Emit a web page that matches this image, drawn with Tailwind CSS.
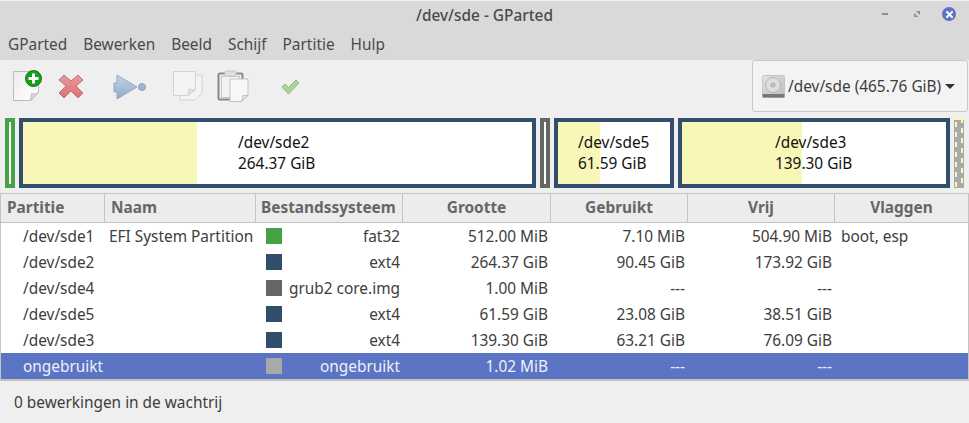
<!DOCTYPE html>
<html lang="en">
<head>
    <meta charset="UTF-8">
    <title>/dev/sde - GParted</title>
    <script src="https://cdn.jsdelivr.net/npm/@tailwindcss/browser@4"></script>
</head>
<body class="w-[969px] h-[423px] overflow-hidden bg-[#efefef] text-[#3d3d3d] text-[15.4px] font-['Noto_Sans',sans-serif]">
    <!-- Title bar -->
    <div class="h-[30px] bg-[#d9d9d9] border-t border-[#f0f0f0] flex items-center relative">
        <div class="w-full text-center text-[#4a4a4a] font-medium">/dev/sde - GParted</div>
        <div class="absolute right-[13px] top-[6px] flex items-center">
            <div class="w-[6px] h-[2px] bg-[#8e8e8e]"></div>
            <svg width="6" height="6" viewBox="0 0 6 6" class="ml-[26px] mr-[22px]"><path d="M0 6V2L2 4L4 2L2 0H6V4L4 2L2 4L4 6Z" fill="#8e8e8e"/></svg>
            <div class="w-[14px] h-[14px] rounded-full bg-[#5c74c4] flex items-center justify-center">
                <svg width="7" height="7" viewBox="0 0 7 7"><path d="M1 1L6 6M6 1L1 6" stroke="#fff" stroke-width="2" stroke-linecap="round"/></svg>
            </div>
        </div>
    </div>
    <!-- Menu -->
    <div class="h-[30px] bg-[#d9d9d9] flex items-center pl-[8px] gap-[16px] text-[#4a4a4a]">
        <span>GParted</span><span>Bewerken</span><span>Beeld</span><span>Schijf</span><span>Partitie</span><span>Hulp</span>
    </div>
    <!-- Toolbar -->
    <div class="h-[52px] flex relative">
        <div class="flex items-start pt-[10px] pl-[12px]">
            <svg width="32" height="32" viewBox="0 0 32 32" class="mr-[14px]">
                <defs>
                    <linearGradient id="page" x1="0" y1="0" x2="1" y2="1"><stop offset="0" stop-color="#ececec"/><stop offset="1" stop-color="#fff"/></linearGradient>
                    <linearGradient id="cross" x1="0" y1="0" x2="0" y2="1"><stop offset="0" stop-color="#e89a9a"/><stop offset="1" stop-color="#de7272"/></linearGradient>
                    <linearGradient id="arrow" x1="0" y1="0" x2="0" y2="1"><stop offset="0" stop-color="#c5d3e6"/><stop offset="1" stop-color="#8fa9ca"/></linearGradient>
                    <linearGradient id="disk" x1="0" y1="0" x2="1" y2="1"><stop offset="0" stop-color="#e4e4e4"/><stop offset="1" stop-color="#bdbdbd"/></linearGradient>
                </defs>
                <path d="M1.5 1.5H26.5V22L19 30.5H1.5Z" fill="url(#page)" stroke="#bdbdbd"/>
                <path d="M18.5 30L19.5 23.5C22.5 24.5 25 24 26.5 22Z" fill="#dcdcdc" stroke="#bdbdbd"/>
                <circle cx="21.5" cy="8.5" r="8" fill="#16a016" stroke="#0b7a0b"/>
                <path d="M21.5 3.5V13.5M16.5 8.5H26.5" stroke="#fff" stroke-width="3"/>
            </svg>
            <svg width="26" height="26" viewBox="0 0 26 26" class="mt-[3px] mr-[29px]">
                <path d="M6 2L13 8L20 2L25 7L18 13L25 20L20 25L13 18L6 25L1 20L8 13L1 7Z" fill="url(#cross)" stroke="#c07272" stroke-linejoin="round"/>
            </svg>
            <svg width="34" height="30" viewBox="0 0 34 30" class="mt-[4px] mr-[25px]">
                <path d="M4 1V9H1V18H4V25L24 13Z" fill="url(#arrow)" stroke="#93a8c4"/>
                <circle cx="29" cy="13" r="3.5" fill="#9db4d2" stroke="#8ba2c0"/>
            </svg>
            <svg width="32" height="32" viewBox="0 0 32 32" class="mr-[13px]">
                <path d="M8 5H30V23L23 30H8Z" fill="#f4f4f4" stroke="#d2d2d2"/>
                <path d="M1.5 1.5H23.5V20L16 25.5H1.5Z" fill="#f4f4f4" stroke="#d2d2d2"/>
                <path d="M16 25L17 19C20 20 22 20 23.5 19Z" fill="#e4e4e4" stroke="#d2d2d2"/>
            </svg>
            <svg width="33" height="33" viewBox="0 0 33 33" class="mr-[31px]">
                <rect x="1.5" y="3.5" width="24" height="26" rx="1.5" fill="#eee" stroke="#8a8a8a" stroke-width="2"/>
                <rect x="4.5" y="6.5" width="18" height="21" fill="#f2f2f2" stroke="#c8c8c8"/>
                <rect x="8" y="1" width="11" height="5" rx="1" fill="#dedede" stroke="#c8c8c8"/>
                <path d="M13 9H31V25L25 31.5H13Z" fill="#f7f7f7" stroke="#c4c4c4"/>
                <path d="M24.5 31L26 25.5H31Z" fill="#e2e2e2" stroke="#c4c4c4"/>
            </svg>
            <svg width="19" height="16" viewBox="0 0 19 16" class="mt-[9px]">
                <path d="M1 8L4 5L7.5 8.5L15 1L18 4L7.5 15Z" fill="#a8d596" stroke="#93b98a" stroke-linejoin="round"/>
            </svg>
        </div>
        <!-- Device combo -->
        <div class="absolute right-[1px] top-0 w-[216px] h-[52px] bg-[#f3f3f3] border border-[#c8c8c8] rounded-[3px] flex items-center pl-[9px] text-[#3d3d3d]">
            <svg width="23" height="23" viewBox="0 0 23 23" class="shrink-0">
                <rect x="0.5" y="0.5" width="22" height="22" rx="2" fill="url(#disk)" stroke="#c4c4c4"/>
                <rect x="0.5" y="19" width="22" height="3.5" fill="#777"/>
                <circle cx="11" cy="10" r="7.5" fill="#dedede" stroke="#b4b4b4"/>
                <circle cx="11" cy="10" r="2" fill="#c8c8c8" stroke="#a6a6a6"/>
            </svg>
            <span class="ml-[3px] mt-[2px] whitespace-nowrap">/dev/sde (465.76 GiB)</span>
            <div class="ml-[4px] w-0 h-0 border-x-[5px] border-x-transparent border-t-[5px] border-t-[#333]"></div>
        </div>
    </div>
    <!-- Partition map -->
    <div class="h-[70px] mt-[6px] pl-[5px] flex gap-[4px] text-[#111] leading-[21px]">
        <div class="w-[10px] border-[4px] border-[#45a345] bg-white"></div>
        <div class="w-[517px] border-[4px] border-[#314e6c] bg-white relative flex items-center">
            <div class="absolute inset-y-0 left-0 w-[174px] bg-[#f8f7b8]"></div>
            <div class="relative ml-[215px]">/dev/sde2<br>264.37 GiB</div>
        </div>
        <div class="w-[10px] border-[4px] border-[#666] bg-white"></div>
        <div class="w-[120px] border-[4px] border-[#314e6c] bg-white relative flex items-center">
            <div class="absolute inset-y-0 left-0 w-[42px] bg-[#f8f7b8]"></div>
            <div class="relative ml-[20px]">/dev/sde5<br>61.59 GiB</div>
        </div>
        <div class="w-[272px] border-[4px] border-[#314e6c] bg-white relative flex items-center">
            <div class="absolute inset-y-0 left-0 w-[120px] bg-[#f8f7b8]"></div>
            <div class="relative ml-[93px]">/dev/sde3<br>139.30 GiB</div>
        </div>
        <svg width="10" height="70" viewBox="0 0 10 70">
            <rect width="10" height="70" fill="#a9a9a9"/>
            <rect width="10" height="2" fill="#f8f7b8"/>
            <path d="M2 4V70" stroke="#f8f7b8" stroke-width="2" stroke-dasharray="5 5"/>
            <path d="M8 0V70" stroke="#f8f7b8" stroke-width="2" stroke-dasharray="5 5"/>
        </svg>
    </div>
    <!-- Partition table -->
    <div class="mt-[5px] h-[188px] bg-white border border-[#c4c4c4] border-b-2">
        <div class="h-[29px] bg-[#ececec] border-b border-[#c4c4c4] font-bold text-[#666] grid grid-cols-[103px_151px_147px_148px_137px_147px_1fr] items-stretch">
            <div class="pl-[6px] flex items-center">Partitie</div>
            <div class="pl-[6px] flex items-center border-l border-[#c4c4c4]">Naam</div>
            <div class="pl-[5px] flex items-center border-l border-[#c4c4c4] whitespace-nowrap">Bestandssysteem</div>
            <div class="flex items-center justify-center border-l border-[#c4c4c4]">Grootte</div>
            <div class="flex items-center justify-center border-l border-[#c4c4c4]">Gebruikt</div>
            <div class="flex items-center justify-center border-l border-[#c4c4c4]">Vrij</div>
            <div class="flex items-center justify-center border-l border-[#c4c4c4]">Vlaggen</div>
        </div>
        <div class="h-[26px] pt-[2px] grid grid-cols-[103px_151px_147px_148px_137px_147px_1fr] items-center">
            <div class="pl-[22px]">/dev/sde1</div>
            <div class="pl-[5px] whitespace-nowrap">EFI System Partition</div>
            <div class="pl-[11px] pr-[2px] flex items-center justify-between"><i class="w-[16px] h-[16px] mb-[2px] bg-[#45a345]"></i><span>fat32</span></div>
            <div class="text-right pr-[2px]">512.00 MiB</div>
            <div class="text-right pr-[2px]">7.10 MiB</div>
            <div class="text-right pr-[2px]">504.90 MiB</div>
            <div class="pl-[7px]">boot, esp</div>
        </div>
        <div class="h-[26px] pt-[2px] grid grid-cols-[103px_151px_147px_148px_137px_147px_1fr] items-center">
            <div class="pl-[22px]">/dev/sde2</div>
            <div></div>
            <div class="pl-[11px] pr-[2px] flex items-center justify-between"><i class="w-[16px] h-[16px] mb-[2px] bg-[#314e6c]"></i><span>ext4</span></div>
            <div class="text-right pr-[2px]">264.37 GiB</div>
            <div class="text-right pr-[2px]">90.45 GiB</div>
            <div class="text-right pr-[2px]">173.92 GiB</div>
            <div></div>
        </div>
        <div class="h-[26px] pt-[2px] grid grid-cols-[103px_151px_147px_148px_137px_147px_1fr] items-center">
            <div class="pl-[22px]">/dev/sde4</div>
            <div></div>
            <div class="pl-[11px] pr-[2px] flex items-center justify-between"><i class="w-[16px] h-[16px] mb-[2px] bg-[#666]"></i><span>grub2 core.img</span></div>
            <div class="text-right pr-[2px]">1.00 MiB</div>
            <div class="text-right pr-[2px]">---</div>
            <div class="text-right pr-[2px]">---</div>
            <div></div>
        </div>
        <div class="h-[26px] pt-[2px] grid grid-cols-[103px_151px_147px_148px_137px_147px_1fr] items-center">
            <div class="pl-[22px]">/dev/sde5</div>
            <div></div>
            <div class="pl-[11px] pr-[2px] flex items-center justify-between"><i class="w-[16px] h-[16px] mb-[2px] bg-[#314e6c]"></i><span>ext4</span></div>
            <div class="text-right pr-[2px]">61.59 GiB</div>
            <div class="text-right pr-[2px]">23.08 GiB</div>
            <div class="text-right pr-[2px]">38.51 GiB</div>
            <div></div>
        </div>
        <div class="h-[26px] pt-[2px] grid grid-cols-[103px_151px_147px_148px_137px_147px_1fr] items-center">
            <div class="pl-[22px]">/dev/sde3</div>
            <div></div>
            <div class="pl-[11px] pr-[2px] flex items-center justify-between"><i class="w-[16px] h-[16px] mb-[2px] bg-[#314e6c]"></i><span>ext4</span></div>
            <div class="text-right pr-[2px]">139.30 GiB</div>
            <div class="text-right pr-[2px]">63.21 GiB</div>
            <div class="text-right pr-[2px]">76.09 GiB</div>
            <div></div>
        </div>
        <div class="h-[26px] pt-[2px] grid grid-cols-[103px_151px_147px_148px_137px_147px_1fr] items-center bg-[#5c74c4] text-[#eef1fa]">
            <div class="pl-[22px]">ongebruikt</div>
            <div></div>
            <div class="pl-[11px] pr-[2px] flex items-center justify-between"><i class="w-[16px] h-[16px] mb-[2px] bg-[#a9a9a9]"></i><span>ongebruikt</span></div>
            <div class="text-right pr-[2px]">1.02 MiB</div>
            <div class="text-right pr-[2px]">---</div>
            <div class="text-right pr-[2px]">---</div>
            <div></div>
        </div>
    </div>
    <!-- Status bar -->
    <div class="h-[41px] pl-[14px] pt-[3px] flex items-center">0 bewerkingen in de wachtrij</div>
</body>
</html>
